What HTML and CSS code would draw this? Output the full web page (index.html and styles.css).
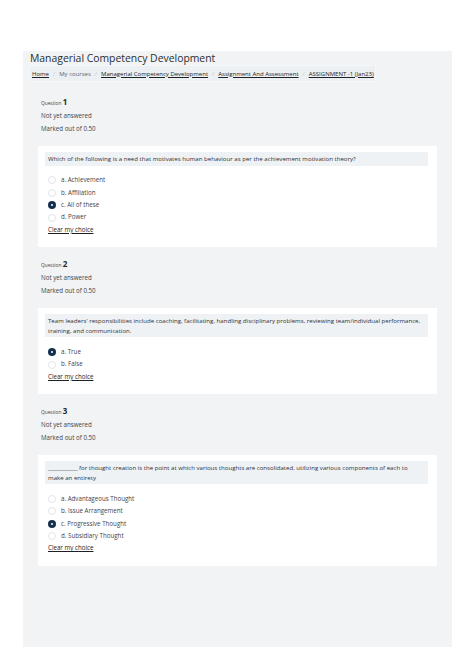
FILE: index.html
```html
<!DOCTYPE html>
<html lang="en">
<head>
<meta charset="utf-8">
<title>Managerial Competency Development</title>
<link rel="stylesheet" href="styles.css">
</head>
<body>
<div class="page">
  <h1 class="title">Managerial Competency Development</h1>
  <nav class="crumbs">
    <a href="#">Home</a><span class="sep">/</span><span class="plain">My courses</span><span class="sep">/</span><a href="#">Managerial Competency Development</a><span class="sep">/</span><a href="#">Assignment And Assessment</a><span class="sep">/</span><a href="#">ASSIGNMENT -1 (Jan23)</a>
  </nav>

  <div class="qinfo">
    <div class="qno">Question <b>1</b></div>
    <div class="line">Not yet answered</div>
    <div class="line">Marked out of 0.50</div>
  </div>
  <div class="card">
    <div class="qtext">Which of the following is a need that motivates human behaviour as per the achievement motivation theory?</div>
    <div class="opts">
      <div class="opt"><span class="radio"></span>a. Achievement</div>
      <div class="opt"><span class="radio"></span>b. Affiliation</div>
      <div class="opt"><span class="radio on"></span>c. All of these</div>
      <div class="opt"><span class="radio"></span>d. Power</div>
      <a class="clear" href="#">Clear my choice</a>
    </div>
  </div>

  <div class="qinfo">
    <div class="qno">Question <b>2</b></div>
    <div class="line">Not yet answered</div>
    <div class="line">Marked out of 0.50</div>
  </div>
  <div class="card">
    <div class="qtext">Team leaders' responsibilities include coaching, facilitating, handling disciplinary problems, reviewing team/individual performance, training, and communication.</div>
    <div class="opts">
      <div class="opt"><span class="radio on"></span>a. True</div>
      <div class="opt"><span class="radio"></span>b. False</div>
      <a class="clear" href="#">Clear my choice</a>
    </div>
  </div>

  <div class="qinfo">
    <div class="qno">Question <b>3</b></div>
    <div class="line">Not yet answered</div>
    <div class="line">Marked out of 0.50</div>
  </div>
  <div class="card">
    <div class="qtext">___________ for thought creation is the point at which various thoughts are consolidated, utilizing various components of each to make an entirety</div>
    <div class="opts">
      <div class="opt"><span class="radio"></span>a. Advantageous Thought</div>
      <div class="opt"><span class="radio"></span>b. Issue Arrangement</div>
      <div class="opt"><span class="radio on"></span>c. Progressive Thought</div>
      <div class="opt"><span class="radio"></span>d. Subsidiary Thought</div>
      <a class="clear" href="#">Clear my choice</a>
    </div>
  </div>
</div>
</body>
</html>
```

FILE: styles.css
```css
html, body {
  margin: 0;
  padding: 0;
  background: #ffffff;
}

body {
  font-family: "Open Sans", "Noto Sans", sans-serif;
  color: #33363a;
}

.page {
  margin: 51px 0 0 23px;
  width: 429px;
  height: 596px;
  background: #f1f3f4;
}

.title {
  margin: 0;
  padding-left: 7px;
  font-size: 10.4px;
  line-height: 14px;
  font-weight: 400;
  color: #2a2e32;
}

.crumbs {
  margin-left: 6px;
  width: 344px;
  height: 17px;
  padding-left: 3px;
  display: flex;
  align-items: center;
  background: #edf0f2;
  box-shadow: inset 0 0 0 1px #f6f7f8;
  font-size: 6px;
  white-space: nowrap;
}

.crumbs a {
  color: #1d2125;
  text-decoration: underline;
}

.crumbs .plain {
  color: #5f6368;
}

.crumbs .sep {
  color: #c4c8cc;
  margin: 0 4px;
}

.qinfo {
  margin: 13.25px 0 0 18px;
  font-size: 6.2px;
  color: #3f4347;
}

.qinfo + .card {
  margin-top: 10.5px;
}

.card + .qinfo {
  margin-top: 10.25px;
}

.qinfo .qno,
.qinfo .line {
  line-height: 13.5px;
  height: 13.5px;
}

.qno {
  font-size: 4.8px;
  color: #3f4347;
}

.qno b {
  font-size: 8px;
  font-weight: 700;
  color: #25292d;
}

.card {
  margin-left: 15px;
  width: 399px;
  box-sizing: border-box;
  background: #ffffff;
  padding: 6px 9px 11px 7px;
}

.qtext {
  background: #eef2f5;
  padding: 2px 6px 2px 3px;
  font-size: 6.1px;
  line-height: 9.5px;
  color: #2e3135;
}

.opts {
  margin-top: 8.5px;
  padding-left: 3px;
  display: flex;
  flex-direction: column;
}

.opt {
  height: 12.4px;
  line-height: 12.4px;
  font-size: 6.2px;
  display: flex;
  align-items: center;
  color: #3f4347;
}

.radio {
  width: 8px;
  height: 8px;
  box-sizing: border-box;
  border-radius: 50%;
  border: 0.8px solid #e2e5e8;
  background: #ffffff;
  margin-right: 5px;
  flex: none;
  position: relative;
}

.radio.on {
  border: none;
  background: #15304f;
}

.radio.on::after {
  content: "";
  position: absolute;
  left: 2.75px;
  top: 2.75px;
  width: 2.5px;
  height: 2.5px;
  border-radius: 50%;
  background: #ffffff;
}

.clear {
  line-height: 12.4px;
  height: 12.4px;
  font-size: 6.2px;
  color: #1d2125;
  text-decoration: underline;
  align-self: flex-start;
}
```
